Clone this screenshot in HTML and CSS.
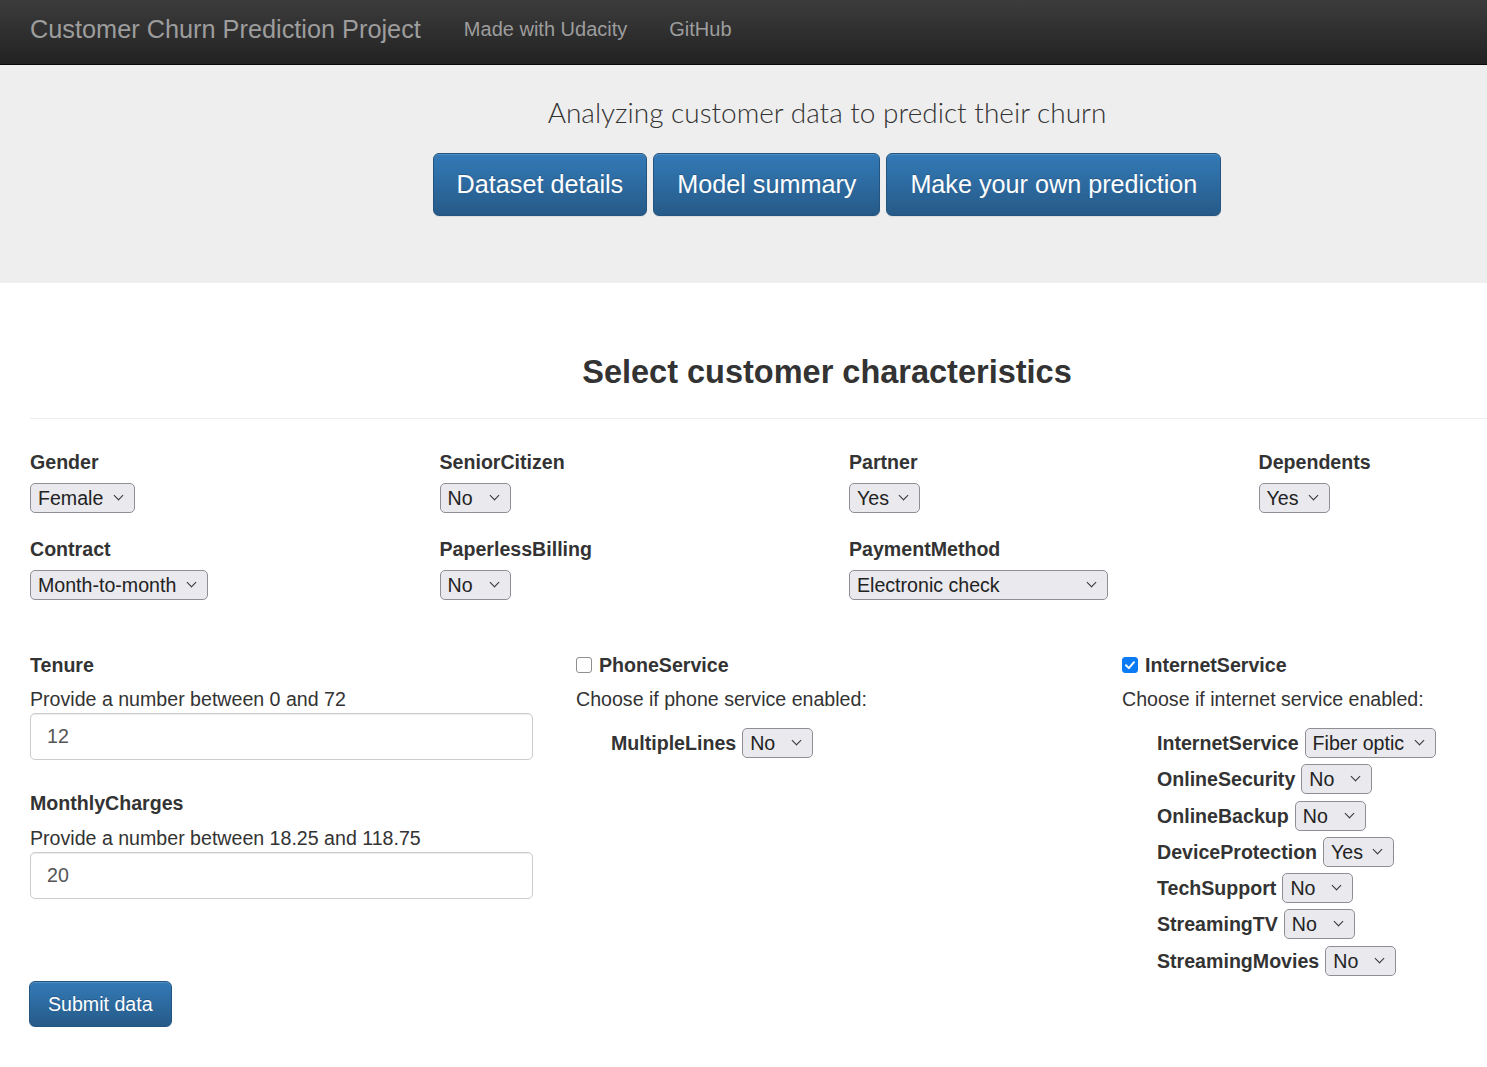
FILE: index.html
```html
<!DOCTYPE html>
<html lang="en">
<head>
<meta charset="utf-8">
<title>Customer Churn Prediction Project</title>
<link rel="stylesheet" href="styles.css">
</head>
<body>
<div class="page">
  <nav class="navbar">
    <a class="brand" href="#">Customer Churn Prediction Project</a>
    <a class="nav-link" href="#">Made with Udacity</a>
    <a class="nav-link" href="#">GitHub</a>
  </nav>

  <header class="jumbotron">
    <h1 class="lead-title">Analyzing customer data to predict their churn</h1>
    <div class="btn-row">
      <a class="btn btn-lg" href="#">Dataset details</a>
      <a class="btn btn-lg" href="#">Model summary</a>
      <a class="btn btn-lg" href="#">Make your own prediction</a>
    </div>
  </header>

  <main class="content">
    <h2 class="section-title">Select customer characteristics</h2>
    <hr class="rule">

    <form class="form">
      <div class="grid4">
        <div class="field">
          <label class="lbl">Gender</label>
          <span class="sel"><select><option>Female</option><option>Male</option></select></span>
        </div>
        <div class="field">
          <label class="lbl">SeniorCitizen</label>
          <span class="sel"><select><option>No</option><option>Yes</option></select></span>
        </div>
        <div class="field">
          <label class="lbl">Partner</label>
          <span class="sel"><select><option>Yes</option><option>No</option></select></span>
        </div>
        <div class="field">
          <label class="lbl">Dependents</label>
          <span class="sel"><select><option>Yes</option><option>No</option></select></span>
        </div>
        <div class="field">
          <label class="lbl">Contract</label>
          <span class="sel"><select><option>Month-to-month</option><option>One year</option><option>Two year</option></select></span>
        </div>
        <div class="field">
          <label class="lbl">PaperlessBilling</label>
          <span class="sel"><select><option>No</option><option>Yes</option></select></span>
        </div>
        <div class="field">
          <label class="lbl">PaymentMethod</label>
          <span class="sel"><select><option>Electronic check</option><option>Mailed check</option><option>Bank transfer (automatic)</option><option>Credit card (automatic)</option></select></span>
        </div>
        <div class="field"></div>
      </div>

      <div class="grid3">
        <div class="col">
          <label class="lbl">Tenure</label>
          <p class="help">Provide a number between 0 and 72</p>
          <input class="text-input" type="text" value="12">
          <label class="lbl lbl-gap">MonthlyCharges</label>
          <p class="help help-2">Provide a number between 18.25 and 118.75</p>
          <input class="text-input" type="text" value="20">
        </div>

        <div class="col">
          <label class="lbl check-lbl"><span class="box"></span>PhoneService</label>
          <p class="help">Choose if phone service enabled:</p>
          <div class="nested">
            <div class="inline-row"><span class="lbl">MultipleLines</span><span class="sel"><select><option>No</option><option>Yes</option></select></span></div>
          </div>
        </div>

        <div class="col">
          <label class="lbl check-lbl"><span class="box checked"><svg viewBox="0 0 16 16" width="16" height="16"><path d="M4 8.3 L6.9 11.1 L12 5.2" fill="none" stroke="#fff" stroke-width="2" stroke-linecap="round" stroke-linejoin="round"/></svg></span>InternetService</label>
          <p class="help">Choose if internet service enabled:</p>
          <div class="nested">
            <div class="inline-row"><span class="lbl">InternetService</span><span class="sel"><select><option>Fiber optic</option><option>DSL</option><option>No</option></select></span></div>
            <div class="inline-row"><span class="lbl">OnlineSecurity</span><span class="sel"><select><option>No</option><option>Yes</option></select></span></div>
            <div class="inline-row"><span class="lbl">OnlineBackup</span><span class="sel"><select><option>No</option><option>Yes</option></select></span></div>
            <div class="inline-row"><span class="lbl">DeviceProtection</span><span class="sel"><select><option>Yes</option><option>No</option></select></span></div>
            <div class="inline-row"><span class="lbl">TechSupport</span><span class="sel"><select><option>No</option><option>Yes</option></select></span></div>
            <div class="inline-row"><span class="lbl">StreamingTV</span><span class="sel"><select><option>No</option><option>Yes</option></select></span></div>
            <div class="inline-row"><span class="lbl">StreamingMovies</span><span class="sel"><select><option>No</option><option>Yes</option></select></span></div>
          </div>
        </div>
      </div>

      <button class="btn btn-submit" type="button">Submit data</button>
    </form>
  </main>
</div>
</body>
</html>
```

FILE: styles.css
```css
html, body {
  margin: 0;
  padding: 0;
  overflow: hidden;
  background: #fff;
}

body {
  font-family: "Liberation Sans", Arial, sans-serif;
  font-size: 19.6px;
  line-height: 28px;
  color: #333;
}

.page {
  width: 1654px;
}

/* Navbar */
.navbar {
  display: flex;
  align-items: center;
  box-sizing: border-box;
  height: 65px;
  padding: 0 0 7px 30px;
  background: linear-gradient(to bottom, #3c3c3c 0%, #222 100%);
  border-bottom: 1px solid #080808;
}

.brand {
  font-size: 25.3px;
  color: #9d9d9d;
  text-decoration: none;
  margin-right: 22px;
}

.nav-link {
  font-size: 20px;
  color: #9d9d9d;
  text-decoration: none;
  padding: 0 21px;
}

/* Jumbotron */
.jumbotron {
  background: #eee;
  padding: 31px 0 67px;
  text-align: center;
}

.lead-title {
  margin: 0;
  font-family: Lato, "Liberation Sans", sans-serif;
  font-weight: 300;
  font-size: 28px;
  line-height: 32px;
  color: #333;
}

.btn-row {
  display: flex;
  justify-content: center;
  gap: 6px;
  margin-top: 25px;
}

.btn {
  display: inline-block;
  color: #fff;
  text-decoration: none;
  background: linear-gradient(to bottom, #337ab7 0%, #265a88 100%);
  border: 1px solid #245580;
  border-radius: 6px;
  font-family: "Liberation Sans", Arial, sans-serif;
  text-shadow: 0 -1px 0 rgba(0,0,0,0.2);
  box-shadow: inset 0 1px 0 rgba(255,255,255,0.15), 0 1px 1px rgba(0,0,0,0.075);
}

.btn-lg {
  font-size: 25.2px;
  line-height: 33px;
  padding: 14px 23px;
}

/* Main */
.content {
  padding: 0 0 0 30px;
}

.section-title {
  margin: 71px 0 0 -30px;
  text-align: center;
  font-size: 32.5px;
  line-height: 36px;
  font-weight: bold;
  color: #333;
}

.rule {
  margin: 28px 0 0 0;
  border: 0;
  border-top: 1px solid #eee;
}

.form {
  padding-top: 29px;
}

.grid4 {
  display: grid;
  grid-template-columns: repeat(4, 379.5px);
  column-gap: 30px;
  row-gap: 22px;
}

.field {
  display: flex;
  flex-direction: column;
  align-items: flex-start;
}

.lbl {
  font-weight: bold;
  display: inline-block;
}

.field .lbl {
  margin-bottom: 7px;
}

.sel {
  position: relative;
  display: inline-block;
  height: 30px;
}

.sel select {
  -webkit-appearance: none;
  appearance: none;
  height: 30px;
  margin: 0;
  padding: 0 30px 0 7px;
  font-family: "Liberation Sans", Arial, sans-serif;
  font-size: 19.6px;
  color: #222;
  background: #e9e9ee;
  border: 1px solid #8e8e96;
  border-radius: 5px;
}

.sel::after {
  content: "";
  position: absolute;
  right: 13px;
  top: 9px;
  width: 6px;
  height: 6px;
  border-right: 1.6px solid #333;
  border-bottom: 1.6px solid #333;
  transform: rotate(45deg);
  pointer-events: none;
}

.grid3 {
  display: grid;
  grid-template-columns: repeat(3, 516px);
  column-gap: 30px;
  margin-top: 51px;
}

.col {
  display: flex;
  flex-direction: column;
  align-items: flex-start;
}

.help {
  margin: 6px 0 0 0;
}

.help-2 {
  margin-top: 7px;
}

.text-input {
  box-sizing: border-box;
  width: 503px;
  height: 47px;
  padding: 0 16px;
  font-family: "Liberation Sans", Arial, sans-serif;
  font-size: 19.6px;
  color: #555;
  border: 1px solid #ccc;
  border-radius: 5px;
  box-shadow: inset 0 1px 1px rgba(0,0,0,0.075);
}

.lbl-gap {
  margin-top: 29px;
}

.check-lbl {
  display: flex;
  align-items: center;
  gap: 7px;
}

.box {
  box-sizing: border-box;
  width: 16px;
  height: 16px;
  border: 1px solid #8e8e93;
  border-radius: 3px;
  background: #fff;
  display: inline-flex;
}

.box.checked {
  background: #0b7bf5;
  border-color: #0b7bf5;
}

.box svg {
  display: block;
  margin: -1px;
}

.nested {
  padding: 15px 0 0 35px;
  display: flex;
  flex-direction: column;
  gap: 6.3px;
}

.inline-row {
  display: flex;
  align-items: center;
  gap: 6px;
  height: 30px;
}

.btn-submit {
  margin-top: 5px;
  margin-left: -1px;
  font-size: 19.6px;
  line-height: 26px;
  padding: 9px 18px;
  cursor: pointer;
}
```
